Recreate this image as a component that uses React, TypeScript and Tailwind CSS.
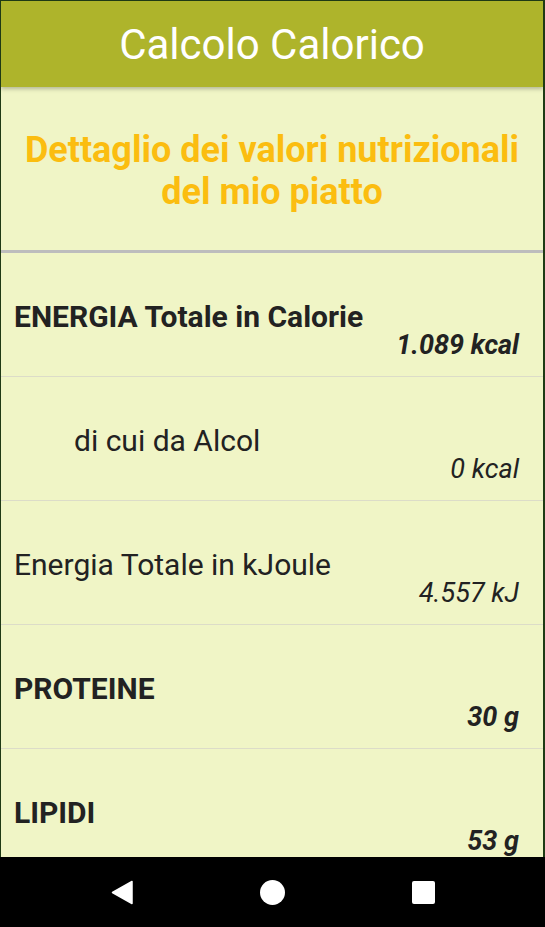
export default function App() {
  const rows = [
    { label: "ENERGIA Totale in Calorie", value: "1.089 kcal", bold: true, indent: false },
    { label: "di cui da Alcol", value: "0 kcal", bold: false, indent: true },
    { label: "Energia Totale in kJoule", value: "4.557 kJ", bold: false, indent: false },
    { label: "PROTEINE", value: "30 g", bold: true, indent: false },
    { label: "LIPIDI", value: "53 g", bold: true, indent: false },
  ];

  return (
    <div
      className="w-[545px] h-[927px] flex flex-col overflow-hidden bg-black"
      style={{ fontFamily: "Roboto, 'Noto Sans', sans-serif" }}
    >
      <div className="flex-1 flex flex-col overflow-hidden border-t border-l border-r-2 border-[#1f3a14] bg-[#f0f5c6]">
        {/* Barra titolo */}
        <div className="h-[86px] shrink-0 bg-[#aeb42b] flex items-center justify-center shadow-[0_2px_4px_rgba(0,0,0,0.25)] z-10">
          <h1 className="text-[42px] text-white leading-none mt-[2px]">Calcolo Calorico</h1>
        </div>

        {/* Intestazione */}
        <div className="h-[166px] shrink-0 flex items-center justify-center border-b-[3px] border-[#bdbdbd]">
          <h2 className="text-[36px] font-bold text-[#fbbd10] text-center leading-[42px] mt-[5px]">
            Dettaglio dei valori nutrizionali
            <br />
            del mio piatto
          </h2>
        </div>

        {/* Righe */}
        <div className="flex-1 overflow-hidden">
          {rows.map((r) => (
            <div
              key={r.label}
              className="h-[124px] shrink-0 flex flex-col pt-[48px] border-b border-[#dcdcc8] text-[#222222]"
            >
              <div
                className={`text-[30px] leading-[32px] ${r.bold ? "font-bold" : ""} ${r.indent ? "pl-[73px]" : "pl-[13px]"}`}
              >
                {r.label}
              </div>
              <div
                className={`text-[27px] leading-[28px] italic text-right pr-[24px] -mt-[2px] ${r.bold ? "font-bold" : ""}`}
              >
                {r.value}
              </div>
            </div>
          ))}
        </div>
      </div>

      {/* Barra di navigazione */}
      <div className="h-[70px] shrink-0 bg-black flex items-center justify-center gap-[127px]">
        <svg width="22" height="25" viewBox="0 0 22 25">
          <path d="M21 1.5 L1.5 12.5 L21 23.5 Z" fill="white" stroke="white" strokeWidth="1.5" strokeLinejoin="round" />
        </svg>
        <div className="w-[25px] h-[25px] rounded-full bg-white" />
        <div className="w-[23px] h-[23px] rounded-[2px] bg-white" />
      </div>
    </div>
  );
}
